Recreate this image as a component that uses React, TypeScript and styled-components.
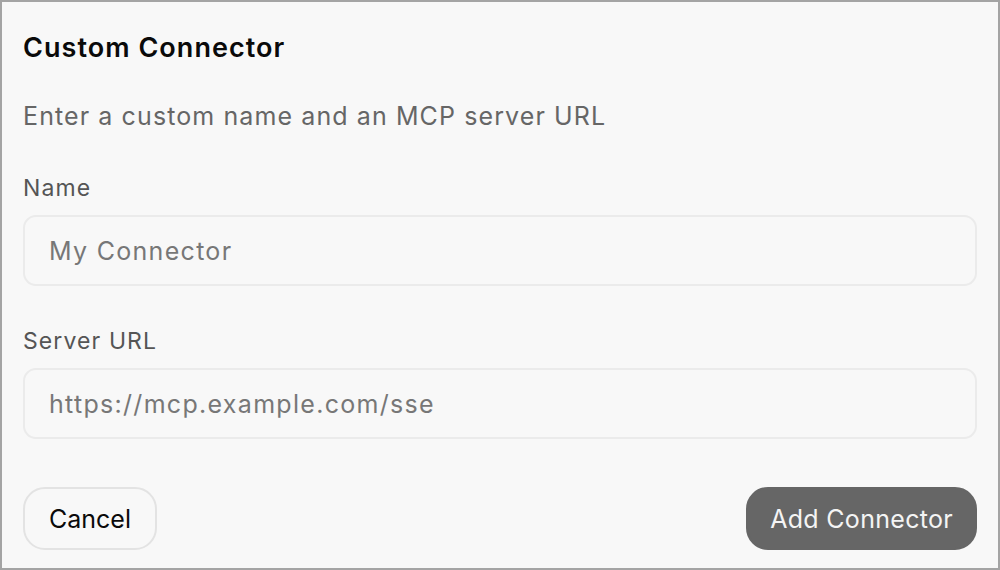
import React from "react";
import styled, { createGlobalStyle } from "styled-components";

const Global = createGlobalStyle`
  html, body { margin: 0; padding: 0; background: #f8f8f8; }
  * { box-sizing: border-box; }
  body { font-family: Inter, "Noto Sans", sans-serif; -webkit-font-smoothing: antialiased; }
`;

const Frame = styled.div`
  width: 1000px;
  height: 570px;
  border: 2px solid #a4a4a4;
  background: #f8f8f8;
  padding: 28px 21px 0 21px;
  display: flex;
  flex-direction: column;
`;

const Title = styled.h1`
  margin: 0;
  font-size: 27px;
  line-height: 36px;
  font-weight: 600;
  color: #0a0a0a;
  letter-spacing: 1.05px;
`;

const Subtitle = styled.p`
  margin: 32px 0 0 0;
  font-size: 25px;
  line-height: 36px;
  color: #666666;
  letter-spacing: 1.1px;
`;

const Field = styled.div<{ $top: number }>`
  display: flex;
  flex-direction: column;
  margin-top: ${(p) => p.$top}px;
`;

const Label = styled.label`
  font-size: 23px;
  line-height: 30px;
  color: #555555;
  letter-spacing: 1.1px;
`;

const Input = styled.input`
  margin-top: 12px;
  height: 71px;
  width: 100%;
  border: 2px solid #ebebeb;
  border-radius: 13px;
  background: #f8f8f8;
  padding: 0 24px;
  font-family: Inter, "Noto Sans", sans-serif;
  font-size: 25px;
  letter-spacing: 1.3px;
  color: #111;
  outline: none;
  &::placeholder { color: #777777; }
`;

const Footer = styled.div`
  margin-top: 48px;
  display: flex;
  justify-content: space-between;
  align-items: center;
`;

const Button = styled.button<{ $primary?: boolean }>`
  height: 63px;
  padding: 0 ${(p) => (p.$primary ? "22px" : "24px")};
  border-radius: 22px;
  font-family: Inter, "Noto Sans", sans-serif;
  font-size: 25px;
  letter-spacing: ${(p) => (p.$primary ? "0.3px" : "0")};
  cursor: pointer;
  border: 2px solid ${(p) => (p.$primary ? "#666666" : "#e3e3e3")};
  background: ${(p) => (p.$primary ? "#666666" : "#f8f8f8")};
  color: ${(p) => (p.$primary ? "#f4f4f4" : "#0a0a0a")};
`;

export default function App() {
  return (
    <>
      <Global />
      <Frame>
        <Title>Custom Connector</Title>
        <Subtitle>Enter a custom name and an MCP server URL</Subtitle>
        <Field $top={39}>
          <Label>Name</Label>
          <Input placeholder="My Connector" />
        </Field>
        <Field $top={40}>
          <Label>Server URL</Label>
          <Input placeholder="https://mcp.example.com/sse" />
        </Field>
        <Footer>
          <Button>Cancel</Button>
          <Button $primary>Add Connector</Button>
        </Footer>
      </Frame>
    </>
  );
}
